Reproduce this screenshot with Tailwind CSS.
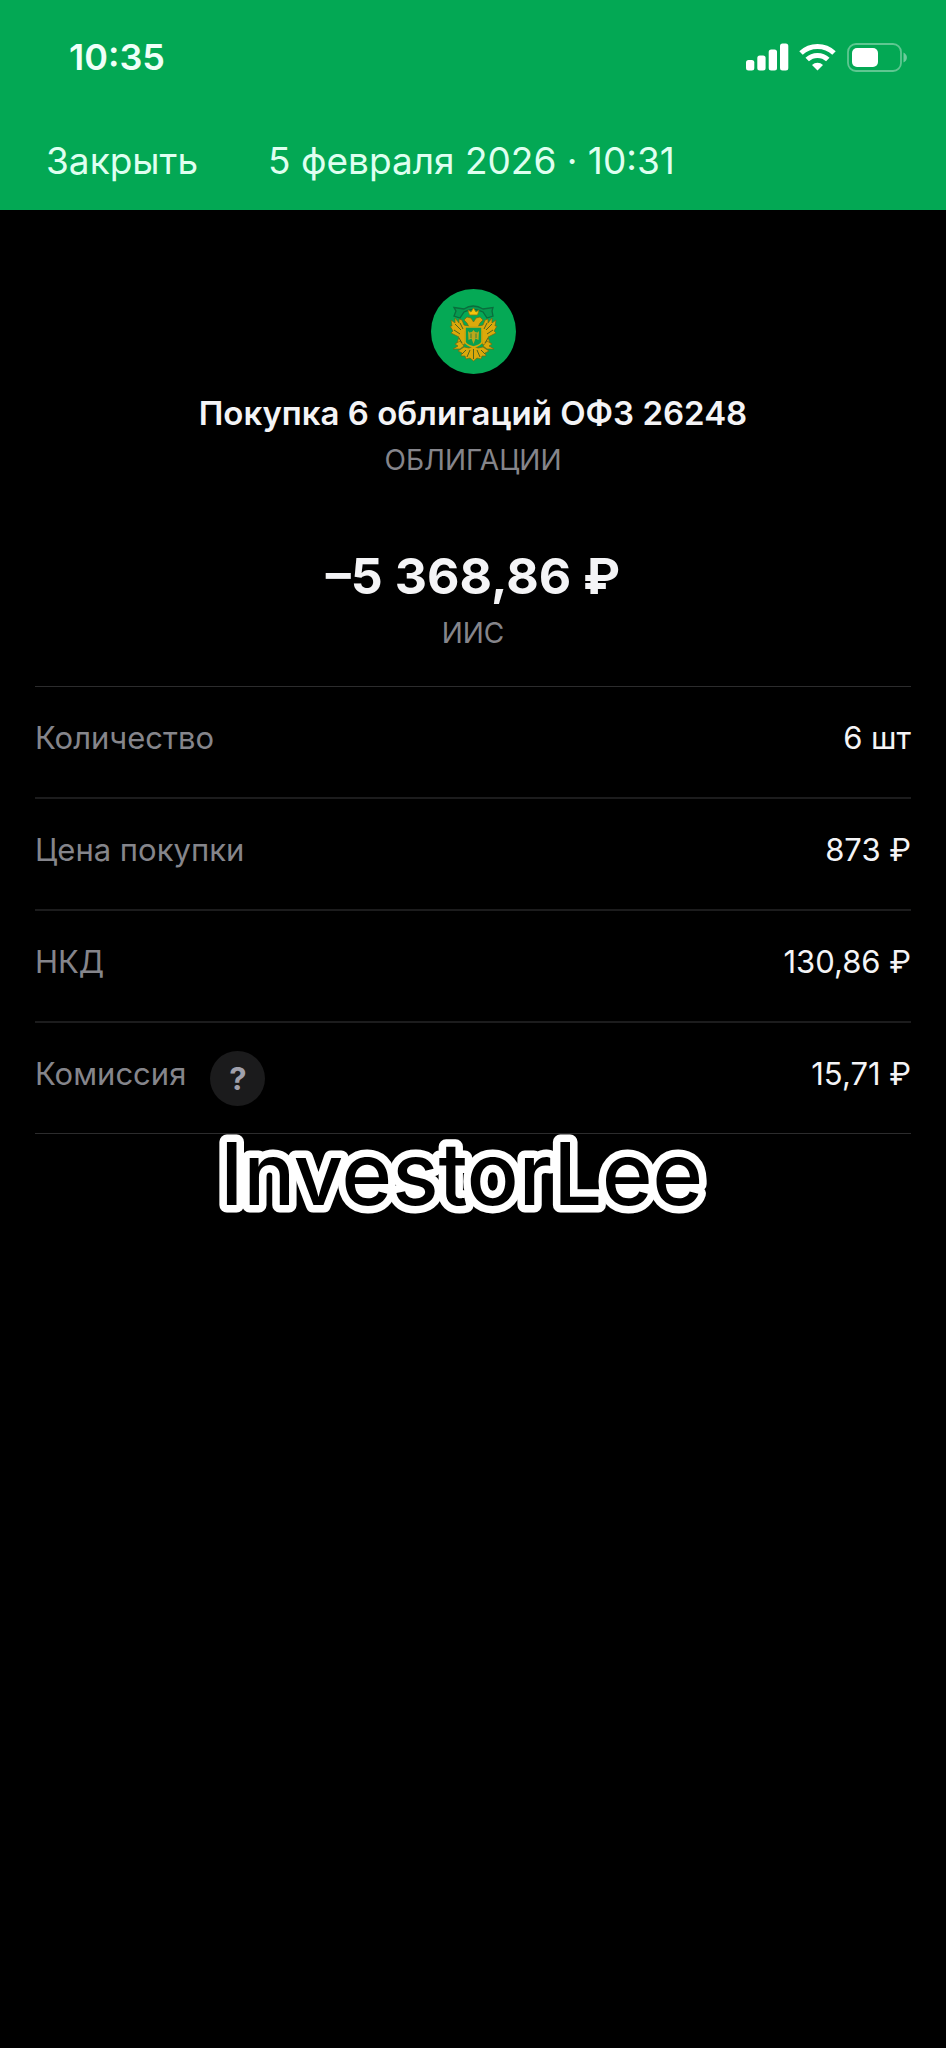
<!DOCTYPE html>
<html lang="ru">
<head>
  <meta charset="UTF-8" />
  <meta name="viewport" content="width=device-width, initial-scale=1.0"/>
  <title>Покупка 6 облигаций ОФЗ 26248</title>
  <script src="https://cdn.jsdelivr.net/npm/@tailwindcss/browser@4"></script>
</head>
<body class="bg-black min-h-screen text-[#f4f4f6] font-['Inter','Liberation_Sans',sans-serif]">
  <header class="bg-[#03a854] text-[#dffff0]">
    <!-- Status bar -->
    <div class="flex items-center justify-between h-[114px] pl-[69px] pr-[38px]">
      <time class="text-[36px] leading-[44px] font-semibold text-[#effff8]">10:35</time>
      <div class="flex items-center gap-[10px]">
        <svg class="w-[43px] h-[28px]" viewBox="0 0 43 28" fill="#fff" aria-hidden="true">
          <rect x="0" y="17" width="8.300" height="10.500" rx="2.500"/>
          <rect x="11.300" y="12.500" width="8.300" height="15" rx="2.500"/>
          <rect x="22.700" y="6.500" width="8.300" height="21" rx="2.500"/>
          <rect x="34" y="0.500" width="8.300" height="27" rx="2.500"/>
        </svg>
        <svg class="w-[37px] h-[28px]" viewBox="0 0 37 28" fill="none" aria-hidden="true">
          <path d="M2 10 A24 24 0 0 1 35 10" stroke="#fff" stroke-width="5"/>
          <path d="M8.200 16.500 A15 15 0 0 1 28.800 16.500" stroke="#fff" stroke-width="5"/>
          <path d="M18.500 27.500 L13 22 A8 8 0 0 1 24 22 Z" fill="#fff"/>
        </svg>
        <svg class="w-[62px] h-[29px]" viewBox="0 0 62 29" fill="none" aria-hidden="true">
          <rect x="2" y="1" width="53" height="27" rx="8" stroke="#5fc791" stroke-width="1.800"/>
          <rect x="6" y="5" width="26" height="19" rx="5" fill="#fff"/>
          <path d="M57.500 9.500 C62 11.500 62 17.500 57.500 19.500 Z" fill="#6ccb9b"/>
        </svg>
      </div>
    </div>
    <nav class="flex items-center gap-[70px] h-24 pl-[46px] pb-[3px] text-[37px] leading-[46px]">
      <button type="button">Закрыть</button>
      <h1>5 февраля 2026 · 10:31</h1>
    </nav>
  </header>

  <main class="px-[35px] pt-[79px]">
    <section class="flex flex-col items-center text-center pb-9">
      <!-- Issuer emblem -->
      <svg class="w-[85px] h-[85px]" viewBox="0 0 85 85" aria-hidden="true">
        <circle cx="42.500" cy="42.500" r="42.500" fill="#05a955"/>
        <!-- ribbon -->
        <path d="M23 18.500 L33 20 Q42 14 52 20 L62 18.500 L61 22 L62 27 L56 29 L52 23 Q42.500 18 33 23 L29 29 L23 27 L25 22 Z" fill="#079a50" stroke="#0a6d3c" stroke-width="1.300"/>
        <g fill="#dba90b" stroke="#6f6a14" stroke-width="0.700">
          <!-- wings -->
          <path d="M40 38 L33 36 L31 31 L28 30 L28 34 L24 29 L24 34 L20 31 L21 37 L19 37 L22 42 L20 44 L24 46 L28 48 L26 54 L30 57 L34 55 L34 42 L40 40 Z"/>
          <path d="M45 38 L52 36 L54 31 L57 30 L57 34 L61 29 L61 34 L65 31 L64 37 L66 37 L63 42 L65 44 L61 46 L57 48 L59 54 L55 57 L51 55 L51 42 L45 40 Z"/>
          <!-- heads -->
          <path d="M38 38 L36 34 L33 31 L36 28 L40 29 L42.500 33 L45 29 L49 28 L52 31 L49 34 L47 38 Z"/>
          <!-- tail and claws -->
          <path d="M42.500 57 L38 59 L33 58 L27 62 L31 64 L30 67 L34 67 L35 70 L39 69 L42.500 72 L46 69 L50 70 L51 67 L55 67 L54 64 L58 62 L52 58 L47 59 Z"/>
          <path d="M29 52 L24 55 L27 57 L22 60 L29 60 L33 57 Z"/>
          <path d="M56 52 L61 55 L58 57 L63 60 L56 60 L52 57 Z"/>
        </g>
        <path d="M38.500 26 L37 21 L40 23 L42.500 19 L45 23 L48 21 L46.500 26 Z" fill="#f5c60c" stroke="#8a7a10" stroke-width="0.800"/>
        <path d="M24 35 L30 41 M23 41 L29 45 M29 34 L32 40 M61 35 L55 41 M62 41 L56 45 M56 34 L53 40 M42.500 60 V70 M39 61 L36 68 M46 61 L49 68 M35 61 L31 65 M50 61 L54 65 M28 49 L31 54 M57 49 L54 54" stroke="#4d6420" stroke-width="1" fill="none"/>
        <path d="M34 38 H51 V53 Q50 56 42.500 58 Q35 56 34 53 Z" fill="#0a9f4f" stroke="#d9a90c" stroke-width="1.600"/>
        <path d="M37 42 L38.500 43.500 L41 43 L42.500 41 L44 43 L46.500 43.500 L48 42 L47.500 51 L44.500 49.500 L42.500 55 L40.500 49.500 L37.500 51 Z" fill="#b9a71c"/>
        <path d="M40 44.500 V49 M45 44.500 V49" stroke="#2f7f33" stroke-width="0.900"/>
      </svg>
      <h2 class="mt-5 text-[33px] leading-[38px] font-semibold">Покупка 6 облигаций ОФЗ 26248</h2>
      <p class="mt-[11px] text-[28px] leading-[34px] text-[#85858b]">ОБЛИГАЦИИ</p>
      <p class="mt-[69px] text-[50px] leading-[60px] font-bold">–5 368,86 ₽</p>
      <p class="mt-[10px] text-[28px] leading-[34px] text-[#85858b]">ИИС</p>
    </section>

    <!-- Deal details -->
    <dl class="border-y border-[#2c2c2d] divide-y-2 divide-[#1c1c1d] text-[31px] leading-[38px]">
      <div class="flex justify-between pt-8 pb-10">
        <dt class="text-[#85858b]">Количество</dt>
        <dd>6 шт</dd>
      </div>
      <div class="flex justify-between pt-8 pb-10">
        <dt class="text-[#85858b]">Цена покупки</dt>
        <dd>873 ₽</dd>
      </div>
      <div class="flex justify-between pt-8 pb-10">
        <dt class="text-[#85858b]">НКД</dt>
        <dd>130,86 ₽</dd>
      </div>
      <div class="flex justify-between pt-8 pb-10">
        <dt class="flex gap-6 h-[38px] text-[#85858b]">
          Комиссия
          <button type="button" aria-label="Подробнее о комиссии" class="-mt-1 size-[55px] rounded-full bg-[#1b1b1c] text-[#a0a0ab] text-[31px] font-bold">?</button>
        </dt>
        <dd>15,71 ₽</dd>
      </div>
    </dl>

    <!-- Channel signature, laid over the last divider -->
    <div class="relative -mt-[10px] flex justify-center">
      <svg class="w-[506px] h-[100px]" viewBox="0 0 506 100" overflow="visible">
        <text x="0" y="81" class="font-medium text-[86px]" fill="#000" stroke="#fff" stroke-width="15" stroke-linejoin="round" paint-order="stroke"><tspan>Investor</tspan><tspan>Lee</tspan></text>
      </svg>
    </div>
  </main>
</body>
</html>
